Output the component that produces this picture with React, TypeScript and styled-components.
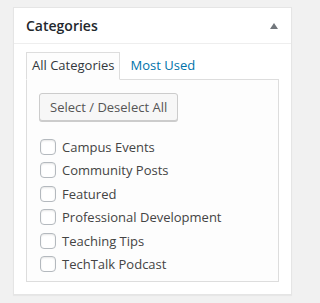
import React from 'react';
import styled, { createGlobalStyle } from 'styled-components';

const GlobalStyle = createGlobalStyle`
  html, body {
    margin: 0;
    padding: 0;
    background: #f1f1f1;
    font-family: "Open Sans", "Noto Sans", sans-serif;
    font-size: 13px;
    color: #444;
  }
`;

const Page = styled.div`
  padding: 7px 4px 10px 13px;
`;

const Box = styled.div`
  width: 279px;
  box-sizing: border-box;
  background: #fff;
  border: 1px solid #e5e5e5;
  box-shadow: 0 1px 1px rgba(0, 0, 0, 0.04);
`;

const Header = styled.div`
  display: flex;
  align-items: center;
  justify-content: space-between;
  height: 35px;
  padding: 0 13px 0 12px;
  border-bottom: 1px solid #eee;
`;

const Title = styled.h2`
  margin: 0;
  font-size: 14px;
  font-weight: 600;
  line-height: 1.4;
  color: #23282d;
`;

const Toggle = styled.span`
  width: 0;
  height: 0;
  margin-top: 1px;
  border-left: 4px solid transparent;
  border-right: 4px solid transparent;
  border-bottom: 6px solid #72777c;
`;

const Inside = styled.div`
  padding: 8px 12px 12px;
`;

const TabBar = styled.ul`
  display: flex;
  align-items: flex-end;
  gap: 4px;
  margin: 0 0 -1px;
  padding: 0;
  list-style: none;
`;

const Tab = styled.li<{ $active?: boolean }>`
  position: relative;
  padding: 3px 5px 5px;
  line-height: 18px;
  border: 1px solid ${(p) => (p.$active ? '#ddd' : 'transparent')};
  border-bottom-color: ${(p) => (p.$active ? '#fdfdfd' : 'transparent')};
  background: ${(p) => (p.$active ? '#fdfdfd' : 'transparent')};
  color: ${(p) => (p.$active ? '#32373c' : '#0073aa')};
  cursor: pointer;
`;

const Panel = styled.div`
  padding: 13px 12px 5px;
  border: 1px solid #ddd;
  background: #fdfdfd;
`;

const Button = styled.button`
  display: block;
  height: 28px;
  margin: 0;
  padding: 0 10px 1px;
  font-family: inherit;
  font-size: 13px;
  line-height: 26px;
  color: #555;
  background: #f7f7f7;
  border: 1px solid #ccc;
  border-radius: 3px;
  box-shadow: 0 1px 0 #ccc;
  cursor: pointer;
`;

const CheckList = styled.ul`
  margin: 14px 0 0;
  padding: 0;
  list-style: none;
`;

const Item = styled.li`
  display: flex;
  align-items: center;
  gap: 6px;
  height: 23.5px;
  padding-left: 1px;
  color: #444;
`;

const Check = styled.span`
  flex: none;
  width: 16px;
  height: 16px;
  box-sizing: border-box;
  background: #fff;
  border: 1px solid #b4b9be;
  border-radius: 4px;
  box-shadow: inset 0 1px 2px rgba(0, 0, 0, 0.1);
`;

const categories = [
  'Campus Events',
  'Community Posts',
  'Featured',
  'Professional Development',
  'Teaching Tips',
  'TechTalk Podcast',
];

const App = () => (
  <Page>
    <GlobalStyle />
    <Box>
      <Header>
        <Title>Categories</Title>
        <Toggle />
      </Header>
      <Inside>
        <TabBar>
          <Tab $active>All Categories</Tab>
          <Tab>Most Used</Tab>
        </TabBar>
        <Panel>
          <Button>Select / Deselect All</Button>
          <CheckList>
            {categories.map((name) => (
              <Item key={name}>
                <Check />
                {name}
              </Item>
            ))}
          </CheckList>
        </Panel>
      </Inside>
    </Box>
  </Page>
);

export default App;
